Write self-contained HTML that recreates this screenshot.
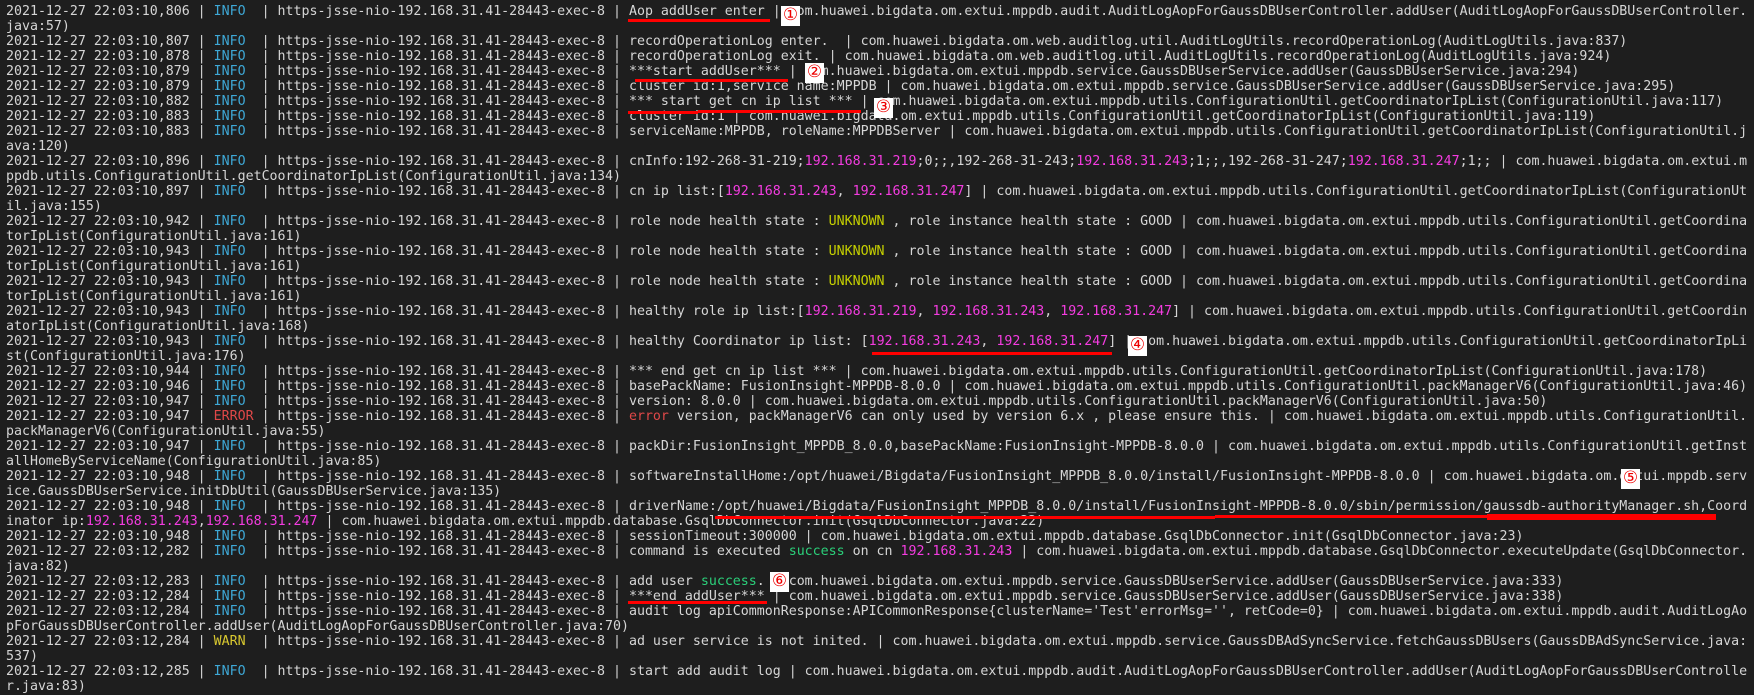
<!DOCTYPE html>
<html><head><meta charset="utf-8">
<style>
html,body{margin:0;padding:0;background:#1e1e1e;width:1754px;height:695px;overflow:hidden;}
body{position:relative;}
pre{margin:0;position:absolute;left:6px;top:4px;font-family:"DejaVu Sans Mono","Liberation Mono",monospace;font-size:13.28px;line-height:15px;color:#d6d6d6;white-space:pre;}
.i{color:#3ea8d6}.e{color:#e04848}.w{color:#d8c830}.p{color:#f43ce0}.g{color:#2bd07a}.u{color:#c6d000}
.r{position:absolute;background:#f00;}
.c{position:absolute;background:#fff;color:#e00;font-family:"DejaVu Sans","Liberation Serif",serif;font-size:17px;line-height:19px;width:19px;height:20px;text-align:center;overflow:hidden;}
</style></head><body>
<pre>2021-12-27 22:03:10,806 | <span class="i">INFO</span>  | https-jsse-nio-192.168.31.41-28443-exec-8 | Aop addUser enter | com.huawei.bigdata.om.extui.mppdb.audit.AuditLogAopForGaussDBUserController.addUser(AuditLogAopForGaussDBUserController.
java:57)
2021-12-27 22:03:10,807 | <span class="i">INFO</span>  | https-jsse-nio-192.168.31.41-28443-exec-8 | recordOperationLog enter.  | com.huawei.bigdata.om.web.auditlog.util.AuditLogUtils.recordOperationLog(AuditLogUtils.java:837)
2021-12-27 22:03:10,878 | <span class="i">INFO</span>  | https-jsse-nio-192.168.31.41-28443-exec-8 | recordOperationLog exit. | com.huawei.bigdata.om.web.auditlog.util.AuditLogUtils.recordOperationLog(AuditLogUtils.java:924)
2021-12-27 22:03:10,879 | <span class="i">INFO</span>  | https-jsse-nio-192.168.31.41-28443-exec-8 | ***start addUser*** | com.huawei.bigdata.om.extui.mppdb.service.GaussDBUserService.addUser(GaussDBUserService.java:294)
2021-12-27 22:03:10,879 | <span class="i">INFO</span>  | https-jsse-nio-192.168.31.41-28443-exec-8 | cluster id:1,service name:MPPDB | com.huawei.bigdata.om.extui.mppdb.service.GaussDBUserService.addUser(GaussDBUserService.java:295)
2021-12-27 22:03:10,882 | <span class="i">INFO</span>  | https-jsse-nio-192.168.31.41-28443-exec-8 | *** start get cn ip list *** | com.huawei.bigdata.om.extui.mppdb.utils.ConfigurationUtil.getCoordinatorIpList(ConfigurationUtil.java:117)
2021-12-27 22:03:10,883 | <span class="i">INFO</span>  | https-jsse-nio-192.168.31.41-28443-exec-8 | cluster id:1 | com.huawei.bigdata.om.extui.mppdb.utils.ConfigurationUtil.getCoordinatorIpList(ConfigurationUtil.java:119)
2021-12-27 22:03:10,883 | <span class="i">INFO</span>  | https-jsse-nio-192.168.31.41-28443-exec-8 | serviceName:MPPDB, roleName:MPPDBServer | com.huawei.bigdata.om.extui.mppdb.utils.ConfigurationUtil.getCoordinatorIpList(ConfigurationUtil.j
ava:120)
2021-12-27 22:03:10,896 | <span class="i">INFO</span>  | https-jsse-nio-192.168.31.41-28443-exec-8 | cnInfo:192-268-31-219;<span class="p">192.168.31.219</span>;0;;,192-268-31-243;<span class="p">192.168.31.243</span>;1;;,192-268-31-247;<span class="p">192.168.31.247</span>;1;; | com.huawei.bigdata.om.extui.m
ppdb.utils.ConfigurationUtil.getCoordinatorIpList(ConfigurationUtil.java:134)
2021-12-27 22:03:10,897 | <span class="i">INFO</span>  | https-jsse-nio-192.168.31.41-28443-exec-8 | cn ip list:[<span class="p">192.168.31.243</span>, <span class="p">192.168.31.247</span>] | com.huawei.bigdata.om.extui.mppdb.utils.ConfigurationUtil.getCoordinatorIpList(ConfigurationUt
il.java:155)
2021-12-27 22:03:10,942 | <span class="i">INFO</span>  | https-jsse-nio-192.168.31.41-28443-exec-8 | role node health state : <span class="u">UNKNOWN</span> , role instance health state : GOOD | com.huawei.bigdata.om.extui.mppdb.utils.ConfigurationUtil.getCoordina
torIpList(ConfigurationUtil.java:161)
2021-12-27 22:03:10,943 | <span class="i">INFO</span>  | https-jsse-nio-192.168.31.41-28443-exec-8 | role node health state : <span class="u">UNKNOWN</span> , role instance health state : GOOD | com.huawei.bigdata.om.extui.mppdb.utils.ConfigurationUtil.getCoordina
torIpList(ConfigurationUtil.java:161)
2021-12-27 22:03:10,943 | <span class="i">INFO</span>  | https-jsse-nio-192.168.31.41-28443-exec-8 | role node health state : <span class="u">UNKNOWN</span> , role instance health state : GOOD | com.huawei.bigdata.om.extui.mppdb.utils.ConfigurationUtil.getCoordina
torIpList(ConfigurationUtil.java:161)
2021-12-27 22:03:10,943 | <span class="i">INFO</span>  | https-jsse-nio-192.168.31.41-28443-exec-8 | healthy role ip list:[<span class="p">192.168.31.219</span>, <span class="p">192.168.31.243</span>, <span class="p">192.168.31.247</span>] | com.huawei.bigdata.om.extui.mppdb.utils.ConfigurationUtil.getCoordin
atorIpList(ConfigurationUtil.java:168)
2021-12-27 22:03:10,943 | <span class="i">INFO</span>  | https-jsse-nio-192.168.31.41-28443-exec-8 | healthy Coordinator ip list: [<span class="p">192.168.31.243</span>, <span class="p">192.168.31.247</span>] | com.huawei.bigdata.om.extui.mppdb.utils.ConfigurationUtil.getCoordinatorIpLi
st(ConfigurationUtil.java:176)
2021-12-27 22:03:10,944 | <span class="i">INFO</span>  | https-jsse-nio-192.168.31.41-28443-exec-8 | *** end get cn ip list *** | com.huawei.bigdata.om.extui.mppdb.utils.ConfigurationUtil.getCoordinatorIpList(ConfigurationUtil.java:178)
2021-12-27 22:03:10,946 | <span class="i">INFO</span>  | https-jsse-nio-192.168.31.41-28443-exec-8 | basePackName: FusionInsight-MPPDB-8.0.0 | com.huawei.bigdata.om.extui.mppdb.utils.ConfigurationUtil.packManagerV6(ConfigurationUtil.java:46)
2021-12-27 22:03:10,947 | <span class="i">INFO</span>  | https-jsse-nio-192.168.31.41-28443-exec-8 | version: 8.0.0 | com.huawei.bigdata.om.extui.mppdb.utils.ConfigurationUtil.packManagerV6(ConfigurationUtil.java:50)
2021-12-27 22:03:10,947 | <span class="e">ERROR</span> | https-jsse-nio-192.168.31.41-28443-exec-8 | <span class="e">error</span> version, packManagerV6 can only used by version 6.x , please ensure this. | com.huawei.bigdata.om.extui.mppdb.utils.ConfigurationUtil.
packManagerV6(ConfigurationUtil.java:55)
2021-12-27 22:03:10,947 | <span class="i">INFO</span>  | https-jsse-nio-192.168.31.41-28443-exec-8 | packDir:FusionInsight_MPPDB_8.0.0,basePackName:FusionInsight-MPPDB-8.0.0 | com.huawei.bigdata.om.extui.mppdb.utils.ConfigurationUtil.getInst
allHomeByServiceName(ConfigurationUtil.java:85)
2021-12-27 22:03:10,948 | <span class="i">INFO</span>  | https-jsse-nio-192.168.31.41-28443-exec-8 | softwareInstallHome:/opt/huawei/Bigdata/FusionInsight_MPPDB_8.0.0/install/FusionInsight-MPPDB-8.0.0 | com.huawei.bigdata.om.extui.mppdb.serv
ice.GaussDBUserService.initDbUtil(GaussDBUserService.java:135)
2021-12-27 22:03:10,948 | <span class="i">INFO</span>  | https-jsse-nio-192.168.31.41-28443-exec-8 | driverName:/opt/huawei/Bigdata/FusionInsight_MPPDB_8.0.0/install/FusionInsight-MPPDB-8.0.0/sbin/permission/gaussdb-authorityManager.sh,Coord
inator ip:<span class="p">192.168.31.243</span>,<span class="p">192.168.31.247</span> | com.huawei.bigdata.om.extui.mppdb.database.GsqlDbConnector.init(GsqlDbConnector.java:22)
2021-12-27 22:03:10,948 | <span class="i">INFO</span>  | https-jsse-nio-192.168.31.41-28443-exec-8 | sessionTimeout:300000 | com.huawei.bigdata.om.extui.mppdb.database.GsqlDbConnector.init(GsqlDbConnector.java:23)
2021-12-27 22:03:12,282 | <span class="i">INFO</span>  | https-jsse-nio-192.168.31.41-28443-exec-8 | command is executed <span class="g">success</span> on cn <span class="p">192.168.31.243</span> | com.huawei.bigdata.om.extui.mppdb.database.GsqlDbConnector.executeUpdate(GsqlDbConnector.
java:82)
2021-12-27 22:03:12,283 | <span class="i">INFO</span>  | https-jsse-nio-192.168.31.41-28443-exec-8 | add user <span class="g">success</span>. | com.huawei.bigdata.om.extui.mppdb.service.GaussDBUserService.addUser(GaussDBUserService.java:333)
2021-12-27 22:03:12,284 | <span class="i">INFO</span>  | https-jsse-nio-192.168.31.41-28443-exec-8 | ***end addUser*** | com.huawei.bigdata.om.extui.mppdb.service.GaussDBUserService.addUser(GaussDBUserService.java:338)
2021-12-27 22:03:12,284 | <span class="i">INFO</span>  | https-jsse-nio-192.168.31.41-28443-exec-8 | audit log apiCommonResponse:APICommonResponse{clusterName='Test'errorMsg='', retCode=0} | com.huawei.bigdata.om.extui.mppdb.audit.AuditLogAo
pForGaussDBUserController.addUser(AuditLogAopForGaussDBUserController.java:70)
2021-12-27 22:03:12,284 | <span class="w">WARN</span>  | https-jsse-nio-192.168.31.41-28443-exec-8 | ad user service is not inited. | com.huawei.bigdata.om.extui.mppdb.service.GaussDBAdSyncService.fetchGaussDBUsers(GaussDBAdSyncService.java:
537)
2021-12-27 22:03:12,285 | <span class="i">INFO</span>  | https-jsse-nio-192.168.31.41-28443-exec-8 | start add audit log | com.huawei.bigdata.om.extui.mppdb.audit.AuditLogAopForGaussDBUserController.addUser(AuditLogAopForGaussDBUserControlle
r.java:83)</pre>
<div class="r" style="left:628px;top:19px;width:142px;height:3px"></div>
<div class="c" style="left:781px;top:6px">①</div>
<div class="r" style="left:635px;top:79px;width:153px;height:3px"></div>
<div class="c" style="left:805px;top:63px">②</div>
<div class="r" style="left:628px;top:111px;width:70px;height:3px"></div>
<div class="r" style="left:698px;top:110px;width:163px;height:3px"></div>
<div class="c" style="left:874px;top:98px">③</div>
<div class="r" style="left:872px;top:352px;width:240px;height:3px"></div>
<div class="c" style="left:1128px;top:336px">④</div>
<div class="c" style="left:1621px;top:469px">⑤</div>
<div class="r" style="left:715px;top:516px;width:500px;height:3px"></div>
<div class="r" style="left:1215px;top:515px;width:272px;height:3px"></div>
<div class="r" style="left:1487px;top:514px;width:229px;height:6px"></div>
<div class="c" style="left:770px;top:572px">⑥</div>
<div class="r" style="left:628px;top:601px;width:139px;height:3px"></div>
</body></html>
